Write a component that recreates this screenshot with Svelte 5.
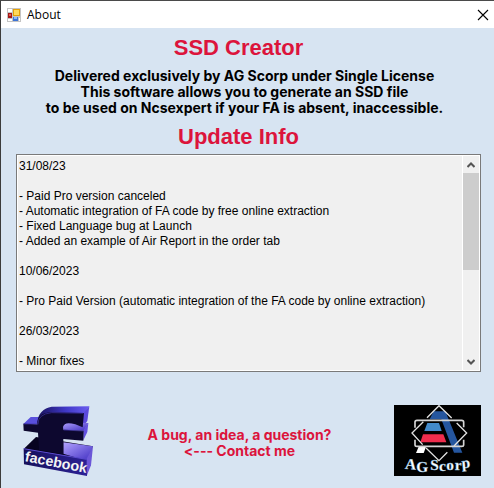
<script lang="ts">
  const intro = [
    'Delivered exclusively by AG Scorp under Single License',
    'This software allows you to generate an SSD file',
    'to be used on Ncsexpert if your FA is absent, inaccessible.'
  ];

  const changelog = `31/08/23

- Paid Pro version canceled
- Automatic integration of FA code by free online extraction
- Fixed Language bug at Launch
- Added an example of Air Report in the order tab

10/06/2023

- Pro Paid Version (automatic integration of the FA code by online extraction)

26/03/2023

- Minor fixes`;

  const lineHeight = 15;
  let log: HTMLTextAreaElement;

  function scrollLines(count: number) {
    log.scrollTop += count * lineHeight;
  }
</script>

<svelte:head>
  <title>About</title>
</svelte:head>

<div class="window" role="dialog" aria-labelledby="window-title">
  <header class="titlebar">
    <svg class="app-icon" width="14" height="14" viewBox="0 0 14 14" aria-hidden="true">
      <rect width="14" height="14" fill="#c4c4c4" />
      <path d="M1 1h4v3H1zM1 11h4v2H1zM12 10h1v3h-1z" fill="#fff" />
      <rect x="6" y="1" width="7" height="7" fill="#e3a008" />
      <rect x="7" y="2" width="5" height="5" fill="#ffd95a" />
      <rect x="1" y="5" width="4" height="5" fill="#a51616" />
      <rect x="2" y="6" width="2" height="2" fill="#e25c4c" />
      <rect x="6" y="9" width="5" height="4" fill="#3d74d6" />
      <rect x="7" y="9" width="3" height="2" fill="#8db9f7" />
    </svg>
    <span id="window-title">About</span>
    <button class="close" type="button" aria-label="Close">
      <svg width="12" height="12" viewBox="0 0 12 12" aria-hidden="true">
        <path d="M1 1l10 10M11 1L1 11" stroke="#000" stroke-width="1.1" />
      </svg>
    </button>
  </header>

  <main>
    <h1>SSD Creator</h1>
    <p class="intro">
      {#each intro as line}
        <span>{line}</span>
      {/each}
    </p>
    <h2 id="update-title">Update Info</h2>

    <div class="log-box">
      <textarea
        bind:this={log}
        value={changelog}
        aria-labelledby="update-title"
        spellcheck="false"
        readonly
      ></textarea>
      <div class="scrollbar">
        <button type="button" aria-label="Scroll up" onclick={() => scrollLines(-1)}>
          <svg width="8" height="6" viewBox="0 0 8 6" aria-hidden="true">
            <path d="M0.5 5L4 1.5L7.5 5" fill="none" stroke="#555" stroke-width="2" />
          </svg>
        </button>
        <div class="track"><div class="thumb"></div></div>
        <button type="button" aria-label="Scroll down" onclick={() => scrollLines(1)}>
          <svg width="8" height="6" viewBox="0 0 8 6" aria-hidden="true">
            <path d="M0.5 1L4 4.5L7.5 1" fill="none" stroke="#555" stroke-width="2" />
          </svg>
        </button>
      </div>
    </div>

    <footer>
      <a href="#facebook" aria-label="Facebook">
        <svg width="73" height="73" viewBox="36 27 219 219" aria-hidden="true">
          <defs>
            <linearGradient id="fb-top" x1="0" y1="0" x2="1" y2="0">
              <stop offset="0" stop-color="#17105a" />
              <stop offset="0.55" stop-color="#4038c8" />
              <stop offset="1" stop-color="#6a5cf0" />
            </linearGradient>
            <linearGradient id="fb-side" x1="0" y1="0" x2="1" y2="1">
              <stop offset="0" stop-color="#b3a4ff" />
              <stop offset="1" stop-color="#3e2cc0" />
            </linearGradient>
            <linearGradient id="fb-base" x1="0" y1="0" x2="1" y2="0">
              <stop offset="0" stop-color="#16105a" />
              <stop offset="1" stop-color="#2c2196" />
            </linearGradient>
          </defs>
          <path d="M41 162L78 126L249 154L230 195Z" fill="#070320" />
          <path d="M160 142L249 154L230 197L160 176Z" fill="url(#fb-side)" />
          <path d="M249 154L243 211L230 243L228 195Z" fill="#6b56d8" />
          <path d="M41 161L230 193L231 243L42 208Z" fill="url(#fb-base)" />
          <path d="M41 161L230 193" stroke="#5b4bd0" stroke-width="3" />
          <path d="M40 87L62 66L88 66L82 87Z" fill="#5950dc" />
          <path d="M82 87C82 54 101 40 125 35L238 34L224 54L152 56Z" fill="url(#fb-top)" />
          <path d="M238 34L232 78L217 98L220 55Z" fill="#5b49dc" />
          <path d="M158 92C161 80 176 80 198 83L235 84L222 107L160 105Z" fill="url(#fb-side)" />
          <path d="M235 84L232 111L220 136L220 106Z" fill="#6350e0" />
          <path
            d="M40 86L82 88C82 64 96 53 124 52L222 54L218 97L196 88Q163 78 159 96L160 104L221 107L220 137L160 132L160 178L87 165L84 113L41 107Z"
            fill="#0d082f"
          />
          <path d="M84 88Q83 57 125 53L220 55M41 87H82M161 105L220 108" fill="none" stroke="#3e32a4" stroke-width="2" />
          <text x="43" y="198" class="fb-text" transform="rotate(11 43 198)">facebook</text>
        </svg>
      </a>

      <p class="contact">
        <span>A bug, an idea, a question?</span>
        <span>&lt;--- Contact me</span>
      </p>

      <svg class="scorp" width="87" height="71" viewBox="27 30 261 213" role="img" aria-label="AG Scorp">
        <rect x="27" y="30" width="261" height="213" fill="#000" />
        <path d="M146 49H181L232 173H207L169 73H134Z" fill="#25569f" />
        <path d="M127 84H162L170 108H118Z" fill="#438bcb" />
        <path d="M114 118H175L184 142H106Z" fill="#ef2d4d" />
        <path d="M102 153H124L116 174H93Z" fill="#fff" />
        <path d="M126 68L162 32L200 69M215 84L245 114L207 153M187 172L162 197L123 159M113 149L81 114L115 80" fill="none" stroke="#e2e2e2" stroke-width="4" />
        <path d="M90 98V81Q90 76 96 76H230Q236 76 236 82V97M90 134V149Q90 154 96 154H230Q236 154 236 149V134" fill="none" stroke="#d5d5d5" stroke-width="5" />
        <g class="scorp-text" aria-hidden="true">
          <text x="59" y="221" transform="rotate(5 59 221)">A</text>
          <text x="94" y="230">G</text>
          <text x="136" y="226">S</text>
          <text x="162" y="227">c</text>
          <text x="184" y="226">o</text>
          <text x="209" y="225">r</text>
          <text x="231" y="220" transform="rotate(-5 231 220)">p</text>
        </g>
      </svg>
    </footer>
  </main>
</div>

<style>
  :global(body) {
    margin: 0;
    background: #d7e4f2;
    color: #000;
    font-family: "Liberation Sans", Arial, sans-serif;
  }

  .window {
    box-sizing: border-box;
    min-height: 100vh;
    border-top: 1px solid #4a4a4a;
    border-left: 1px solid #3c3c3c;
    background: #d7e4f2;
  }

  .titlebar {
    display: flex;
    align-items: center;
    height: 27px;
    padding: 0 5px 0 6px;
    background: #fff;
    font-family: "Open Sans", sans-serif;
    font-size: 12px;
  }

  .app-icon {
    margin-right: 6px;
  }

  button {
    display: flex;
    align-items: center;
    justify-content: center;
    border: 0;
    background: none;
    padding: 0;
  }

  .close {
    margin-left: auto;
  }

  main {
    padding: 6px 13px 12px 15px;
  }

  h1,
  h2,
  p {
    margin: 0;
    font-weight: 700;
    text-align: center;
  }

  h1,
  h2 {
    padding-right: 20px;
    color: #dc143c;
    font-size: 22px;
    line-height: 28px;
  }

  /* calt would turn the typed "<---" into an arrow glyph */
  .intro,
  .contact {
    font-family: Inter, "Liberation Sans", sans-serif;
    font-size: 14px;
    font-feature-settings: "calt" 0;
    line-height: 16px;
  }

  .intro {
    padding: 6px 8px 7px 0;
  }

  p span {
    display: block;
    white-space: nowrap;
  }

  .log-box {
    display: flex;
    height: 214px;
    margin-top: 3px;
    border: 1px solid #7a7a7a;
    background: #fff;
    padding: 1px;
  }

  textarea {
    flex: 1;
    min-width: 0;
    border: 0;
    outline: 0;
    background: #f0f0f0;
    color: #000;
    padding: 3px 1px 0;
    font: 12px/15px "Liberation Sans", Arial, sans-serif;
    overflow: hidden;
    resize: none;
  }

  .scrollbar {
    display: flex;
    flex-direction: column;
    width: 16px;
    margin-left: 1px;
    background: #f0f0f0;
  }

  .scrollbar button {
    height: 17px;
  }

  .track {
    flex: 1;
  }

  .thumb {
    height: 97px;
    background: #cdcdcd;
  }

  footer {
    display: flex;
    align-items: center;
    justify-content: space-between;
    padding: 32px 0 0 6px;
  }

  footer a {
    display: flex;
  }

  .contact {
    padding: 4px 10px 0 0;
    color: #dc143c;
  }

  .fb-text {
    fill: #f4f4f4;
    font: 700 43px "Liberation Sans", Arial, sans-serif;
  }

  .scorp-text {
    fill: #fff;
    stroke: #7fb2d8;
    stroke-width: 1;
    font: 700 46px "Liberation Serif", "Times New Roman", serif;
  }
</style>
